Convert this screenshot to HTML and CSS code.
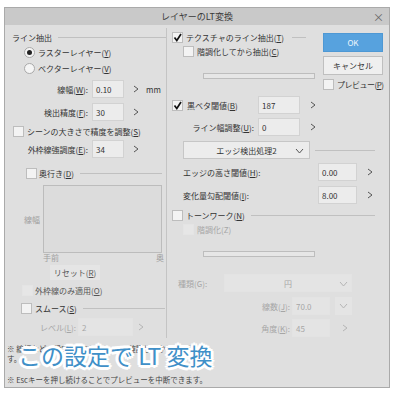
FILE: index.html
```html
<!DOCTYPE html>
<html lang="ja">

<head>
    <meta charset="UTF-8">
    <meta name="viewport" content="width=device-width, initial-scale=1.0">
    <title>レイヤーのLT変換</title>
    <link rel="stylesheet" href="styles.css">
</head>

<body>
    <div class="dialog">
        <div class="titlebar">
            <span></span>
            <span class="title">レイヤーのLT変換</span>
            <span class="close">×</span>
        </div>

        <div class="main">
            <!-- left: line extraction -->
            <div class="left-panel">
                <div class="group-head head-line">
                    <span>ライン抽出</span><span class="rule"></span>
                </div>
                <div class="radio-row"><span class="radio on"></span>ラスターレイヤー(<u>Y</u>)</div>
                <div class="radio-row"><span class="radio"></span>ベクターレイヤー(<u>V</u>)</div>

                <div class="field f-width">
                    <span class="label">線幅(<u>W</u>):</span>
                    <span class="input">0.10</span>
                    <svg class="chev" width="6" height="8"><polyline points="1,1 5,4 1,7" /></svg>
                    <span class="unit">mm</span>
                </div>
                <div class="field f-detect">
                    <span class="label">検出精度(<u>F</u>):</span>
                    <span class="input">30</span>
                    <svg class="chev" width="6" height="8"><polyline points="1,1 5,4 1,7" /></svg>
                </div>
                <div class="check-row scene">
                    <span class="checkbox"></span>シーンの大きさで精度を調整(<u>S</u>)
                </div>
                <div class="field f-outer">
                    <span class="label">外枠線強調度(<u>E</u>):</span>
                    <span class="input">34</span>
                    <svg class="chev" width="6" height="8"><polyline points="1,1 5,4 1,7" /></svg>
                </div>

                <div class="group-head depth">
                    <span class="checkbox"></span><span>奥行き(<u>D</u>)</span><span class="rule"></span>
                </div>
                <div class="graph-row">
                    <span class="graph-label">線幅</span>
                    <div class="graph"></div>
                </div>
                <div class="axis">
                    <span>手前</span><span>奥</span>
                </div>
                <div class="reset-row">
                    <span class="btn-flat">リセット(<u>R</u>)</span>
                </div>
                <div class="check-row outer-only">
                    <span class="checkbox faint"></span>外枠線のみ適用(<u>O</u>)
                </div>

                <div class="group-head smooth">
                    <span class="checkbox"></span><span>スムース(<u>S</u>)</span><span class="rule"></span>
                </div>
                <div class="level-row dim">
                    <span>レベル(<u>L</u>):</span>
                    <span class="input faint">2</span>
                    <svg class="chev light" width="6" height="8"><polyline points="1,1 5,4 1,7" /></svg>
                </div>
            </div>

            <!-- right: texture / tone work -->
            <div class="right-panel">
                <div class="top">
                    <div class="mid-top">
                        <div class="group-head texture">
                            <span class="checkbox"><svg width="9" height="9"><polyline points="1.5,4.5 3.8,7.5 8,1" /></svg></span>
                            <span>テクスチャのライン抽出(<u>T</u>)</span><span class="rule"></span>
                        </div>
                        <div class="check-row sub">
                            <span class="checkbox"></span>階調化してから抽出(<u>C</u>)
                        </div>
                        <div class="progress"></div>
                    </div>
                    <div class="buttons">
                        <div class="btn ok">OK</div>
                        <div class="btn cancel">キャンセル</div>
                        <div class="check-row preview">
                            <span class="checkbox"></span>プレビュー(<u>P</u>)
                        </div>
                    </div>
                </div>

                <div class="field r-black">
                    <span class="label">
                        <span class="checkbox"><svg width="9" height="9"><polyline points="1.5,4.5 3.8,7.5 8,1" /></svg></span>黒ベタ閾値(<u>B</u>)
                    </span>
                    <span class="input">187</span>
                    <svg class="chev" width="6" height="8"><polyline points="1,1 5,4 1,7" /></svg>
                </div>
                <div class="field r-linew">
                    <span class="label">ライン幅調整(<u>U</u>):</span>
                    <span class="input">0</span>
                    <svg class="chev" width="6" height="8"><polyline points="1,1 5,4 1,7" /></svg>
                </div>
                <div class="select-row">
                    <div class="select">
                        <span>エッジ検出処理2</span>
                        <svg class="down" width="9" height="6"><polyline points="1,1 4.5,5 8,1" /></svg>
                    </div>
                    <span class="rule"></span>
                </div>
                <div class="field r-edge">
                    <span class="label">エッジの高さ閾値(<u>H</u>):</span>
                    <span class="input">0.00</span>
                    <svg class="chev" width="6" height="8"><polyline points="1,1 5,4 1,7" /></svg>
                </div>
                <div class="field r-grad">
                    <span class="label">変化量勾配閾値(<u>I</u>):</span>
                    <span class="input">8.00</span>
                    <svg class="chev" width="6" height="8"><polyline points="1,1 5,4 1,7" /></svg>
                </div>

                <div class="group-head tone">
                    <span class="checkbox"></span><span>トーンワーク(<u>N</u>)</span><span class="rule"></span>
                </div>
                <div class="check-row sub dim">
                    <span class="checkbox faint"></span>階調化(Z)
                </div>
                <div class="progress tone-bar"></div>

                <div class="field r-kind dim">
                    <span class="label">種類(G):</span>
                    <div class="select faint">
                        <span>円</span>
                        <svg class="down" width="9" height="6"><polyline points="1,1 4.5,5 8,1" /></svg>
                    </div>
                </div>
                <div class="field r-lines dim">
                    <span class="label">線数(<u>J</u>):</span>
                    <span class="input faint">70.0</span>
                    <span class="drop faint"><svg class="down" width="9" height="6"><polyline points="1,1 4.5,5 8,1" /></svg></span>
                </div>
                <div class="field r-angle dim">
                    <span class="label">角度(<u>K</u>):</span>
                    <span class="input faint">45</span>
                    <svg class="chev light" width="6" height="8"><polyline points="1,1 5,4 1,7" /></svg>
                </div>
            </div>
        </div>

        <div class="notes">
            <p>※ 線幅などの設定は、プレビューで確認してから実行しま</p>
            <p>す。</p>
            <p class="esc">※ Escキーを押し続けることでプレビューを中断できます。</p>
        </div>

        <div class="caption">この設定で LT 変換</div>
    </div>
</body>

</html>
```

FILE: styles.css
```css
/* LT conversion dialog */
body {
    margin: 0;
    padding: 7px 0 0 4px;
    background-color: #fff;
    font-family: "Noto Sans CJK JP", "Noto Sans", sans-serif;
    font-size: 8px;
    color: #333;
}

u {
    text-decoration: underline;
}

.dialog {
    position: relative;
    width: 386px;
    height: 381px;
    box-sizing: border-box;
    border: 1px solid #aaa;
    background-color: #dfdfdf;
}

.titlebar {
    height: 17px;
    display: grid;
    grid-template-columns: 1fr auto 1fr;
    align-items: center;
    background-color: #c9c9c9;
}

.title {
    font-size: 9px;
    color: #3a3a3a;
}

.close {
    justify-self: end;
    padding-right: 5px;
    font-size: 11px;
    color: #666;
}

.main {
    display: flex;
    height: 315px;
    padding-top: 3px;
    box-sizing: border-box;
}

/* shared bits */
.checkbox {
    display: inline-flex;
    align-items: center;
    justify-content: center;
    width: 11px;
    height: 11px;
    box-sizing: border-box;
    border: 1px solid #bdbdbd;
    background-color: #f3f3f3;
    margin-right: 3px;
    flex: none;
}

.checkbox svg polyline {
    fill: none;
    stroke: #111;
    stroke-width: 1.7;
}

.checkbox.faint {
    border-color: #e4e4e4;
    background-color: #e6e6e6;
}

.radio {
    width: 11px;
    height: 11px;
    box-sizing: border-box;
    border: 1px solid #a9a9a9;
    border-radius: 50%;
    background-color: #f5f5f5;
    margin-right: 3px;
    position: relative;
}

.radio.on::after {
    content: "";
    position: absolute;
    left: 2px;
    top: 2px;
    width: 5px;
    height: 5px;
    border-radius: 50%;
    background-color: #222;
}

.rule {
    flex: 1;
    height: 1px;
    background-color: #c0c0c0;
    margin-left: 6px;
}

.group-head,
.check-row,
.radio-row {
    display: flex;
    align-items: center;
    height: 14px;
    white-space: nowrap;
}

.field {
    display: flex;
    align-items: center;
    height: 18px;
    white-space: nowrap;
}

.field .label {
    display: flex;
    align-items: center;
    justify-content: flex-end;
    flex: none;
    height: 18px;
    box-sizing: border-box;
}

.input {
    display: flex;
    align-items: center;
    height: 18px;
    box-sizing: border-box;
    padding-left: 3px;
    border: 1px solid #d2d2d2;
    background-color: #ececec;
    flex: none;
}

.input.faint {
    border-color: #e3e3e3;
    background-color: #e4e4e4;
}

.chev {
    flex: none;
}

.chev polyline,
.down polyline {
    fill: none;
    stroke: #555;
    stroke-width: 1;
}

.chev.light polyline,
.dim .down polyline {
    stroke: #b5b5b5;
}

.dim {
    color: #a6a6a6;
}

/* left panel */
.left-panel {
    width: 162px;
    height: 310px;
    box-sizing: border-box;
    border-right: 1px solid #c4c4c4;
}

.head-line {
    margin-top: 2px;
    padding-left: 7px;
}

.radio-row {
    height: 16px;
    padding-left: 19px;
}

.left-panel .field .label {
    width: 83px;
}

.left-panel .input {
    width: 32px;
    margin-left: 4px;
}

.left-panel .chev {
    margin-left: 9px;
}

.unit {
    margin-left: 7px;
}

.f-width {
    margin-top: 4px;
}

.f-detect {
    margin-top: 5px;
}

.scene {
    margin-top: 3px;
    padding-left: 8px;
}

.f-outer {
    margin-top: 2px;
}

.depth {
    margin-top: 8px;
    padding-left: 21px;
}

.depth .checkbox {
    margin-right: 2px;
}

.depth .rule {
    margin-right: 4px;
}

.graph-row {
    display: flex;
    align-items: center;
    height: 68px;
    margin-top: 5px;
}

.graph-label {
    width: 19px;
    padding-left: 19px;
    color: #a0a0a0;
}

.graph {
    width: 119px;
    height: 68px;
    box-sizing: border-box;
    border: 1px solid #bcbcbc;
    background-color: #dcdcdc;
}

.axis {
    display: flex;
    justify-content: space-between;
    width: 121px;
    height: 10px;
    line-height: 10px;
    margin-left: 38px;
    color: #a0a0a0;
}

.reset-row {
    margin-top: 2px;
    height: 15px;
}

.btn-flat {
    display: flex;
    align-items: center;
    justify-content: center;
    width: 50px;
    height: 15px;
    margin-left: 45px;
    background-color: #e5e5e5;
    color: #555;
}

.outer-only {
    margin-top: 3px;
    padding-left: 17px;
    color: #555;
}

.outer-only .checkbox {
    margin-right: 2px;
}

.smooth {
    margin-top: 4px;
    padding-left: 16px;
}

.smooth .rule {
    margin-right: 1px;
}

.level-row {
    display: flex;
    align-items: center;
    height: 18px;
    margin-top: 3px;
    padding-left: 35px;
}

.level-row .input {
    width: 55px;
    margin-left: 2px;
}

.level-row .chev {
    margin-left: 5px;
}

/* right panel */
.right-panel {
    flex: 1;
}

.top {
    display: flex;
    height: 62px;
}

.mid-top {
    width: 151px;
}

.texture {
    margin-top: 2px;
    padding-left: 5px;
}

.texture .rule {
    margin-left: 8px;
    margin-right: 12px;
}

.check-row.sub {
    padding-left: 16px;
}

.progress {
    width: 112px;
    height: 6px;
    box-sizing: border-box;
    margin-top: 15px;
    margin-left: 36px;
    border: 1px solid #bdbdbd;
    background-color: #e6e6e6;
}

.buttons {
    width: 60px;
    margin-left: 5px;
}

.btn {
    display: flex;
    align-items: center;
    justify-content: center;
    height: 19px;
    box-sizing: border-box;
}

.btn.ok {
    margin-top: 5px;
    background-color: #57a2de;
    border: 1px solid #4e98d4;
    color: #eef6fc;
}

.btn.cancel {
    margin-top: 4px;
    background-color: #efefef;
    border: 1px solid #bfbfbf;
}

.preview {
    margin-top: 3px;
    height: 12px;
    letter-spacing: -0.5px;
}

.right-panel .field .label {
    width: 87px;
}

.right-panel .input {
    width: 42px;
    margin-left: 4px;
}

.right-panel .chev {
    margin-left: 10px;
}

.r-black {
    margin-top: 6px;
}

.r-black .label {
    justify-content: flex-start;
    padding-left: 5px;
}

.r-black .checkbox {
    margin-right: 4px;
}

.r-linew {
    margin-top: 4px;
}

.select-row {
    display: flex;
    align-items: center;
    height: 18px;
    margin-top: 5px;
    padding-left: 16px;
}

.select-row .rule {
    margin-left: 5px;
    margin-right: 14px;
}

.select {
    position: relative;
    display: flex;
    align-items: center;
    justify-content: center;
    width: 127px;
    height: 18px;
    box-sizing: border-box;
    border: 1px solid #c6c6c6;
    background-color: #ececec;
}

.select .down {
    position: absolute;
    right: 5px;
    top: 6px;
}

.select.faint {
    border-color: #e3e3e3;
    background-color: #e4e4e4;
}

.r-edge {
    margin-top: 4px;
}

.r-grad {
    margin-top: 5px;
}

.right-panel .r-edge .label,
.right-panel .r-grad .label {
    width: 151px;
    justify-content: flex-start;
    padding-left: 16px;
}

.r-edge .input,
.r-grad .input {
    width: 39px;
}

.right-panel .r-edge .input,
.right-panel .r-grad .input {
    margin-left: 0;
}

.tone {
    margin-top: 4px;
    padding-left: 5px;
}

.tone .rule {
    margin-right: 14px;
}

.tone-bar {
    margin-top: 15px;
}

.r-kind {
    margin-top: 17px;
}

.right-panel .r-kind .label {
    width: 57px;
    justify-content: flex-start;
    padding-left: 11px;
}

.r-kind .select {
    width: 128px;
}

.r-kind .select .down {
    right: 3px;
}

.r-lines {
    margin-top: 5px;
}

.r-angle {
    margin-top: 4px;
}

.right-panel .r-lines .label,
.right-panel .r-angle .label {
    width: 123px;
}

.right-panel .r-lines .input,
.right-panel .r-angle .input {
    width: 38px;
    margin-left: 2px;
}

.drop {
    display: flex;
    align-items: center;
    justify-content: center;
    width: 17px;
    height: 18px;
    margin-left: 5px;
    background-color: #e4e4e4;
}

.right-panel .r-angle .chev {
    margin-left: 12px;
}

/* notes */
.notes {
    padding: 4px 0 0 2px;
    font-size: 7.5px;
    color: #444;
}

.notes p {
    margin: 0;
    height: 10px;
    line-height: 10px;
    white-space: nowrap;
    overflow: hidden;
}

.notes .esc {
    margin-top: 11px;
}

.caption {
    position: absolute;
    left: 13px;
    top: 336px;
    font-size: 23px;
    line-height: 1;
    color: #3f90c8;
    white-space: nowrap;
    text-shadow:
        2px 0 0 #fff, -2px 0 0 #fff, 0 2px 0 #fff, 0 -2px 0 #fff,
        2px 2px 0 #fff, -2px -2px 0 #fff, 2px -2px 0 #fff, -2px 2px 0 #fff,
        3px 0 0 #fff, -3px 0 0 #fff, 0 3px 0 #fff, 0 -3px 0 #fff;
}
```
